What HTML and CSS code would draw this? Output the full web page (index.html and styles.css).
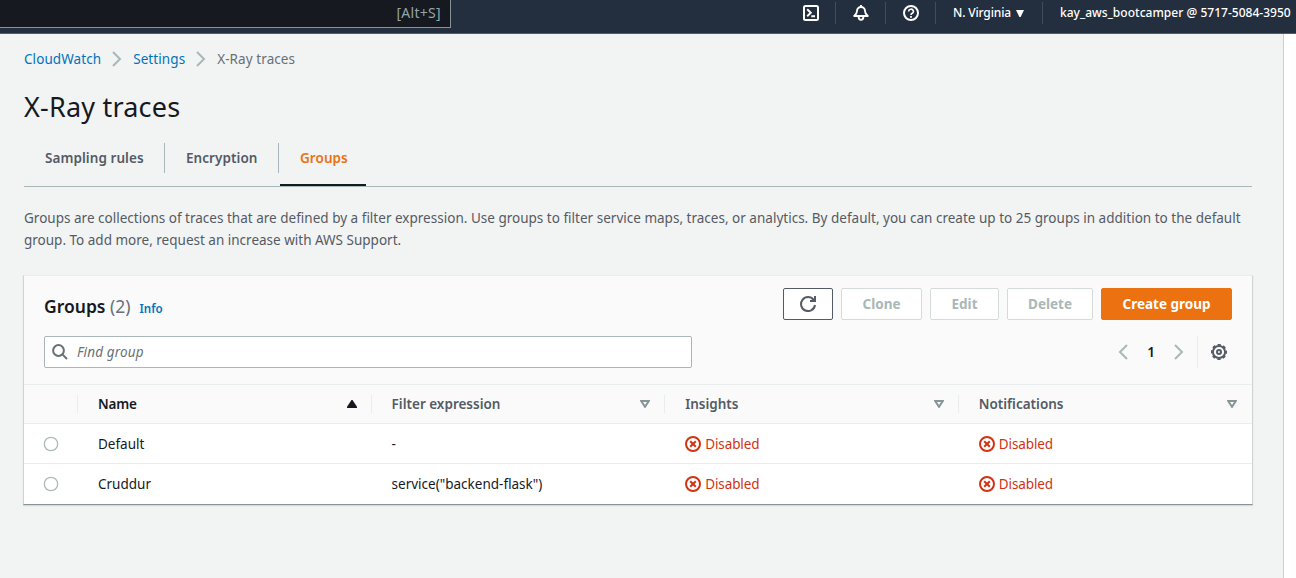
FILE: index.html
```html
<!DOCTYPE html>
<html lang="en">
<head>
<meta charset="utf-8">
<title>X-Ray traces</title>
<link rel="stylesheet" href="styles.css">
</head>
<body>
<header class="topbar">
  <div class="topsearch"><span class="shortcut">[Alt+S]</span></div>
  <nav class="topnav">
    <span class="topicon"><svg width="16" height="16" viewBox="0 0 16 16" fill="none" stroke="#fff" stroke-width="2"><rect x="1" y="1" width="14" height="14" rx="1.5"/><path d="M4.200 4.300 7.800 7.800 4.200 11.300M8.300 11.300h3.700" stroke-width="1.900"/></svg></span>
    <span class="topicon"><svg width="16" height="16" viewBox="0 0 16 16" fill="none" stroke="#fff" stroke-width="1.900" stroke-linejoin="round"><path d="M8 0v2M1.200 11h13.600C12.800 9.400 12 8.500 12 6a4 4 0 0 0-8 0c0 2.500-.8 3.400-2.800 5zM5.600 11.500a2.400 3.400 0 0 0 4.800 0"/></svg></span>
    <span class="topicon"><svg width="16" height="16" viewBox="0 0 16 16" fill="none" stroke="#fff" stroke-width="2"><circle cx="8" cy="8" r="7"/><path d="M5.600 6.400a2.400 2.200 0 1 1 3.600 1.900C8.300 8.800 8 9 8 10" stroke-width="1.600"/><path d="M8 11v1.700" stroke-width="1.800"/></svg></span>
    <span class="region"><span>N. Virginia</span><svg width="8" height="7" viewBox="0 0 8 7"><path d="M0 0h8L4.600 7H3.400z" fill="#fff"/></svg></span>
    <span class="account">kay_aws_bootcamper @ 5717-5084-3950</span>
  </nav>
</header>
<main class="page">
  <nav class="crumbs">
    <a>CloudWatch</a>
    <svg width="10" height="16" viewBox="0 0 10 16"><path d="M1 1l7 7-7 7" fill="none" stroke="#aab7b8" stroke-width="2"/></svg>
    <a>Settings</a>
    <svg width="10" height="16" viewBox="0 0 10 16"><path d="M1 1l7 7-7 7" fill="none" stroke="#aab7b8" stroke-width="2"/></svg>
    <span>X-Ray traces</span>
  </nav>
  <h1 class="title">X-Ray traces</h1>
  <div class="tabs">
    <div class="tab tab-rules">Sampling rules</div>
    <div class="tab tab-enc">Encryption</div>
    <div class="tab active">Groups</div>
  </div>
  <p class="desc"><span class="line-one">Groups are collections of traces that are defined by a filter expression. Use groups to filter service maps, traces, or analytics. By default, you can create up to 25 groups in addition to the default</span><br><span>group. To add more, request an increase with AWS Support.</span></p>
  <section class="card">
    <div class="cardhead">
      <h2 class="heading"><span>Groups</span> <span class="count">(2)</span><a class="info">Info</a></h2>
      <div class="buttons">
        <span class="btn refresh"><svg width="16" height="16" viewBox="0 0 16 16" fill="none" stroke="#545b64" stroke-width="2"><path d="M15 9a7 7 0 1 1-1.400-5.200M15 0v5h-5M13.400 2.500v2"/></svg></span>
        <span class="btn off clone">Clone</span>
        <span class="btn off edit">Edit</span>
        <span class="btn off delete">Delete</span>
        <span class="btn primary">Create group</span>
      </div>
    </div>
    <div class="tools">
      <div class="find"><svg width="16" height="16" viewBox="0 0 16 16" fill="none" stroke="#687078" stroke-width="2"><circle cx="6.500" cy="6.500" r="5.400"/><path d="M10.400 10.400 15 15"/></svg><span>Find group</span></div>
      <div class="pager">
        <svg width="10" height="16" viewBox="0 0 10 16"><path d="M9 1 2 8l7 7" fill="none" stroke="#aab7b8" stroke-width="2"/></svg>
        <span class="num">1</span>
        <svg width="10" height="16" viewBox="0 0 10 16"><path d="M1 1l7 7-7 7" fill="none" stroke="#aab7b8" stroke-width="2"/></svg>
        <span class="gear"><svg width="16" height="16" viewBox="0 0 16 16" fill="none" stroke="#545b64" stroke-width="2"><circle cx="8" cy="8" r="6.100"/><circle cx="8" cy="8" r="7.200" stroke-width="1.700" stroke-dasharray="3.200 2.455" stroke-dashoffset="1.600"/><circle cx="8" cy="8" r="2"/></svg></span>
      </div>
    </div>
    <div class="row head">
      <div class="cell pick"></div>
      <div class="cell sorted"><span>Name</span><svg width="10" height="8" viewBox="0 0 10 8"><path d="M4.500 0h1L10 6.700V8H0V6.700z" fill="#16191f"/></svg></div>
      <div class="cell"><span>Filter expression</span><svg width="10" height="8" viewBox="0 0 10 8"><path d="M1.200 1h7.600L5 6.800z" fill="none" stroke="#879596" stroke-width="2"/></svg></div>
      <div class="cell"><span>Insights</span><svg width="10" height="8" viewBox="0 0 10 8"><path d="M1.200 1h7.600L5 6.800z" fill="none" stroke="#879596" stroke-width="2"/></svg></div>
      <div class="cell"><span>Notifications</span><svg width="10" height="8" viewBox="0 0 10 8"><path d="M1.200 1h7.600L5 6.800z" fill="none" stroke="#879596" stroke-width="2"/></svg></div>
    </div>
    <div class="row">
      <div class="cell pick"><i class="radio"></i></div>
      <div class="cell"><span>Default</span></div>
      <div class="cell"><span>-</span></div>
      <div class="cell status"><svg width="16" height="16" viewBox="0 0 16 16" fill="none" stroke="#d13212" stroke-width="2"><circle cx="8" cy="8" r="7"/><path d="M5.200 5.200l5.600 5.600M10.800 5.200l-5.600 5.600"/></svg><span>Disabled</span></div>
      <div class="cell status"><svg width="16" height="16" viewBox="0 0 16 16" fill="none" stroke="#d13212" stroke-width="2"><circle cx="8" cy="8" r="7"/><path d="M5.200 5.200l5.600 5.600M10.800 5.200l-5.600 5.600"/></svg><span>Disabled</span></div>
    </div>
    <div class="row last">
      <div class="cell pick"><i class="radio"></i></div>
      <div class="cell"><span>Cruddur</span></div>
      <div class="cell"><span>service("backend-flask")</span></div>
      <div class="cell status"><svg width="16" height="16" viewBox="0 0 16 16" fill="none" stroke="#d13212" stroke-width="2"><circle cx="8" cy="8" r="7"/><path d="M5.200 5.200l5.600 5.600M10.800 5.200l-5.600 5.600"/></svg><span>Disabled</span></div>
      <div class="cell status"><svg width="16" height="16" viewBox="0 0 16 16" fill="none" stroke="#d13212" stroke-width="2"><circle cx="8" cy="8" r="7"/><path d="M5.200 5.200l5.600 5.600M10.800 5.200l-5.600 5.600"/></svg><span>Disabled</span></div>
    </div>
  </section>
</main>
</body>
</html>
```
FILE: styles.css
```css
* { box-sizing: border-box; }
body { margin: 0; height: 578px; overflow: hidden; background: #fff; display: flex; flex-direction: column; font: 13.5px/22px "Noto Sans", sans-serif; color: #16191f; white-space: nowrap; }
svg { display: block; flex: none; }
.topbar { height: 34px; flex: none; background: #232f3e; border-bottom: 1px solid #545b64; display: flex; justify-content: space-between; align-items: flex-start; color: #fff; }
.topsearch { width: 451px; height: 28px; background: #16191f; border: solid #879596; border-width: 0 1px 1px 0; display: flex; justify-content: flex-end; padding: 2px 9px 0 0; color: #95a5a6; }
.shortcut { font-size: 14px; letter-spacing: .3px; }
.topnav { display: flex; height: 24px; padding-top: 2px; font-size: 12px; font-weight: 500; }
.topnav > * { height: 22px; display: flex; align-items: center; border-right: 1px solid #414d5c; }
.topicon { width: 50px; justify-content: center; }
.region { width: 107px; padding: 0 18px 0 17px; justify-content: space-between; letter-spacing: -.15px; }
.topnav .account { width: 253px; padding-left: 17px; border: 0; letter-spacing: .02px; }
.page { width: 1284px; flex: 1; background: #f2f3f3; border-right: 1px solid #c9cece; padding: 14px 30px 0 24px; }
.crumbs { display: flex; height: 22px; align-items: center; color: #687078; letter-spacing: .08px; }
.crumbs a, .info { color: #0073bb; }
.crumbs svg { margin: 0 11px; }
.title { margin: 19px 0 0; height: 36px; font-size: 27px; line-height: 36px; font-weight: 400; letter-spacing: .2px; }
.tabs { display: flex; width: 1228px; height: 62px; border-bottom: 1px solid #aab7b8; font-weight: 600; color: #545b64; padding-top: 18px; letter-spacing: .06px; }
.tab { height: 30px; line-height: 30px; padding-left: 21px; border-right: 1px solid #aab7b8; }
.tab-rules { width: 141px; }
.tab-enc { width: 114px; }
.tab.active { height: 43px; width: 86px; margin-left: 1px; padding-left: 20px; border: 0; border-bottom: 2px solid #16191f; color: #ec7211; }
.desc { margin: 20px 0 0; color: #545b64; }
.line-one { letter-spacing: .011px; }
.card { width: 1230px; margin: 24px 0 0 -1px; height: 230px; border: 1px solid #d0d4d4; border-top-color: #eaeded; border-bottom-color: #879596; background: #fff; box-shadow: 0 1px 1px #d5dbdb; }
.cardhead { height: 60px; background: #fafafa; display: flex; justify-content: space-between; padding: 12px 20px 0; }
.heading { margin: 3px 0 0; font-size: 17.5px; line-height: 30px; font-weight: 600; }
.count { font-weight: 400; color: #687078; }
.info { font-size: 11.6px; margin-left: 9px; font-weight: 600; }
.buttons { display: flex; gap: 8px; }
.btn { height: 32px; border: 1px solid #d5dbdb; border-radius: 2px; background: #fff; display: flex; align-items: center; justify-content: center; font-weight: 700; color: #aab7b8; }
.refresh { width: 50px; border-color: #545b64; }
.clone { width: 81px; }
.edit { width: 69px; }
.delete { width: 86px; }
.primary { width: 131px; background: #ec7211; border-color: #ec7211; color: #fff; }
.tools { height: 48px; background: #fafafa; padding: 0 20px; display: flex; justify-content: space-between; }
.find { width: 648px; height: 32px; border: 1px solid #aab7b8; border-radius: 2px; background: #fff; display: flex; align-items: center; padding-left: 8px; gap: 8px; font-style: italic; color: #687078; letter-spacing: .15px; }
.find svg { transform: translateX(-1px); }
.pager { height: 32px; display: flex; align-items: center; }
.num { width: 36px; margin: 0 5px; text-align: center; font-weight: 600; }
.gear { height: 32px; margin-left: 13px; padding: 8px 5px 0 13px; border-left: 1px solid #eaeded; }
.row { display: grid; grid-template-columns: 54px repeat(4, 293.6px); height: 40px; border-bottom: 1px solid #eaeded; width: 1228px; overflow: hidden; }
.row.last { border: 0; }
.cell { display: flex; align-items: center; padding: 0 20px; }
.head { background: #fafafa; border-top: 1px solid #eaeded; font-weight: 600; color: #545b64; }
.head .cell { height: 18px; margin-top: 10px; justify-content: space-between; padding: 0 14px 0 20px; border-right: 1px solid #eaeded; }
.head .cell:last-child { border: 0; padding-right: 15px; }
.head .sorted { color: #16191f; letter-spacing: -.15px; }
.radio { width: 14px; height: 14px; border: 1px solid #aab7b8; border-radius: 50%; background: #fff; box-shadow: 0 0 0 .3px #aab7b8; }
.status { color: #d13212; gap: 4px; letter-spacing: -.1px; }
```
